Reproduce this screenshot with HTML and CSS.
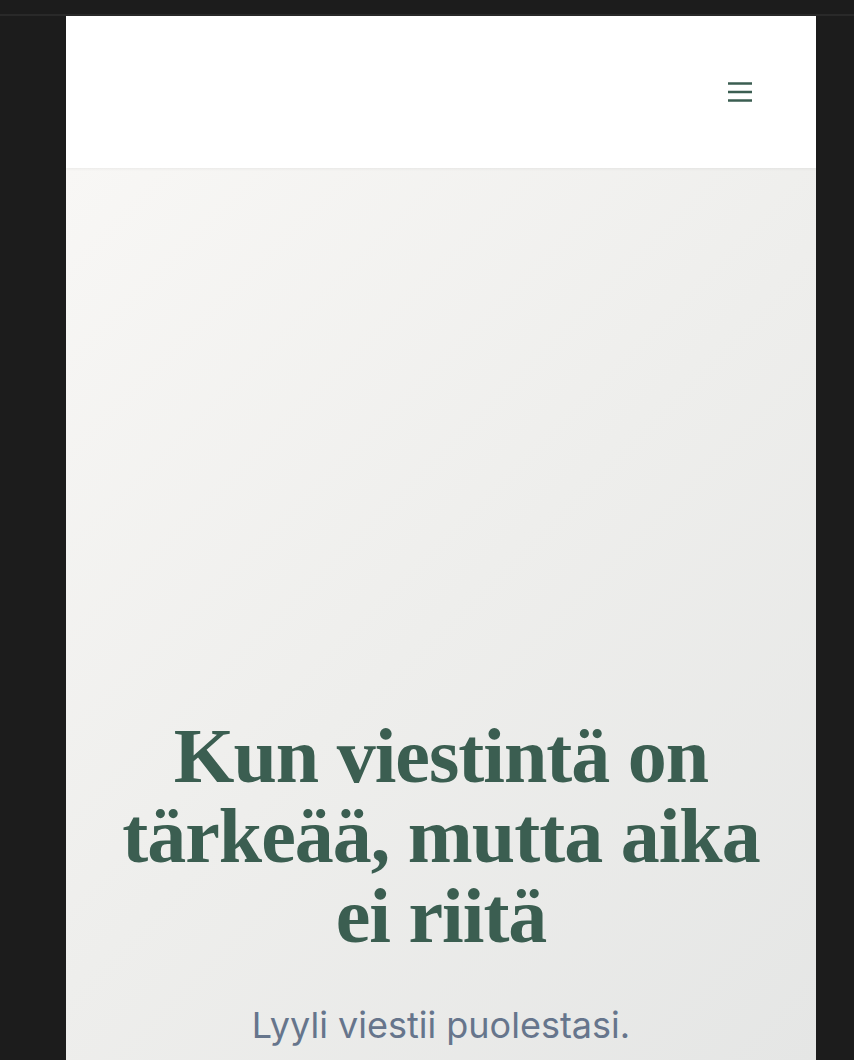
FILE: index.html
```html
<!DOCTYPE html>
<html lang="fi">
<head>
<meta charset="utf-8">
<title>Lyyli</title>
<link rel="stylesheet" href="styles.css">
</head>
<body>
<div class="topbar"></div>
<div class="page">
  <header class="header">
    <button class="menu" aria-label="Valikko">
      <svg width="24" height="24" viewBox="0 0 24 24" fill="none" stroke="#3b5e51" stroke-width="2.5" stroke-linecap="butt">
        <path d="M0 3.5h24M0 12h24M0 20.5h24"/>
      </svg>
    </button>
  </header>
  <section class="hero">
    <h1 class="title">Kun viestintä on tärkeää, mutta aika ei riitä</h1>
    <p class="lead">Lyyli viestii puolestasi.</p>
  </section>
</div>
</body>
</html>
```
FILE: styles.css
```css
html, body {
  margin: 0;
  padding: 0;
  background: #1c1c1c;
  height: 100%;
  overflow: hidden;
}
.topbar {
  height: 14px;
  border-bottom: 2px solid #292929;
  background: #1c1c1c;
}
.page {
  width: 750px;
  margin-left: 66px;
  height: 1044px;
  background: #fff;
}
.header {
  height: 152px;
  background: #fff;
  display: flex;
  align-items: center;
  justify-content: flex-end;
  padding-right: 64px;
  box-sizing: border-box;
  position: relative;
  z-index: 1;
  box-shadow: 0 1px 3px rgba(0, 0, 0, 0.06);
}
.menu {
  border: 0;
  background: none;
  padding: 0;
  width: 24px;
  height: 24px;
  display: flex;
}
.hero {
  height: 892px;
  background: linear-gradient(135deg, #f8f7f5 0%, #eeeeec 50%, #e5e6e5 100%);
  padding-top: 548px;
  box-sizing: border-box;
  text-align: center;
}
.title {
  margin: 0 auto;
  width: 680px;
  font-family: "Liberation Serif", "DejaVu Serif", serif;
  font-weight: 700;
  font-size: 78px;
  line-height: 80px;
  letter-spacing: -1px;
  color: #3b5e51;
}
.lead {
  margin: 45px 0 0;
  font-family: Inter, "Noto Sans", sans-serif;
  font-size: 36px;
  line-height: 48px;
  color: #66758c;
}
```
